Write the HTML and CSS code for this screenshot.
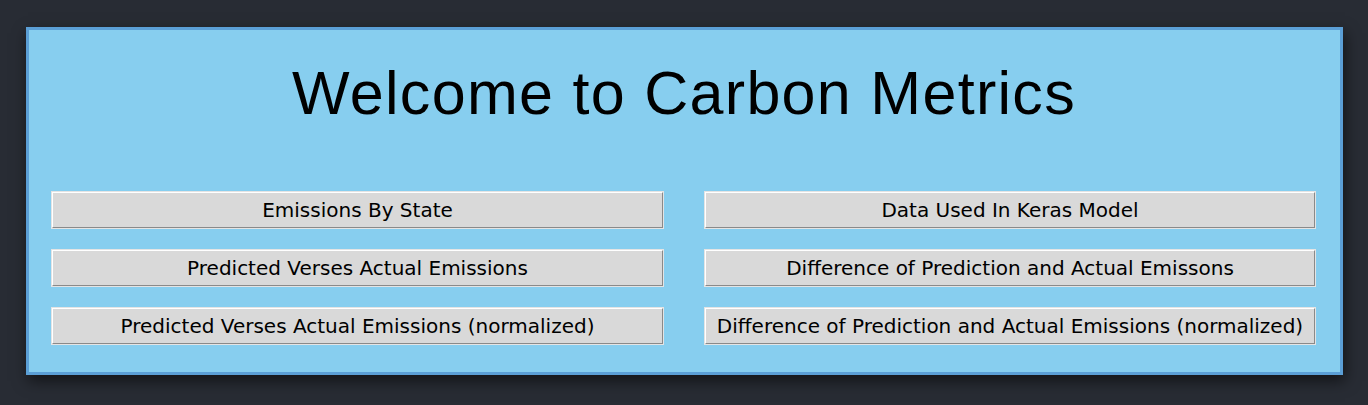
FILE: index.html
```html
<!DOCTYPE html>
<html>
<head>
<meta charset="utf-8">
<link rel="stylesheet" href="styles.css">
</head>
<body>
<div class="panel">
  <h1 class="title">Welcome to Carbon Metrics</h1>
  <div class="grid">
    <button class="btn">Emissions By State</button>
    <button class="btn">Data Used In Keras Model</button>
    <button class="btn">Predicted Verses Actual Emissions</button>
    <button class="btn">Difference of Prediction and Actual Emissons</button>
    <button class="btn">Predicted Verses Actual Emissions (normalized)</button>
    <button class="btn">Difference of Prediction and Actual Emissions (normalized)</button>
  </div>
</div>
</body>
</html>
```
FILE: styles.css
```css
html, body {
  margin: 0;
  padding: 0;
  background: #282c34;
}
body {
  padding: 27px 25px 30px 26px;
  height: 405px;
  box-sizing: border-box;
}
.panel {
  width: 1317px;
  height: 348px;
  box-sizing: border-box;
  background: #87ceef;
  border: 3px solid #5b9fd6;
  box-shadow: 2px 6px 14px rgba(0, 0, 0, 0.55);
  padding: 27px 23px 0 22px;
}
.title {
  margin: 0;
  font-family: "Liberation Sans", Arial, sans-serif;
  font-weight: normal;
  font-size: 61px;
  letter-spacing: 1.3px;
  line-height: 72px;
  text-align: center;
  color: #000;
}
.grid {
  margin-top: 62px;
  padding: 1px;
  display: grid;
  grid-template-columns: 611px 610px;
  column-gap: 42px;
  row-gap: 22px;
}
.btn {
  height: 36px;
  margin: 0;
  padding: 0;
  background: #d9d9d9;
  border: 1px solid;
  border-color: #ffffff #8a8a8a #8a8a8a #ffffff;
  outline: 1px solid #e4e4e4;
  outline-offset: 0;
  font-family: "DejaVu Sans", sans-serif;
  font-size: 20px;
  color: #000;
  text-align: center;
}
```
